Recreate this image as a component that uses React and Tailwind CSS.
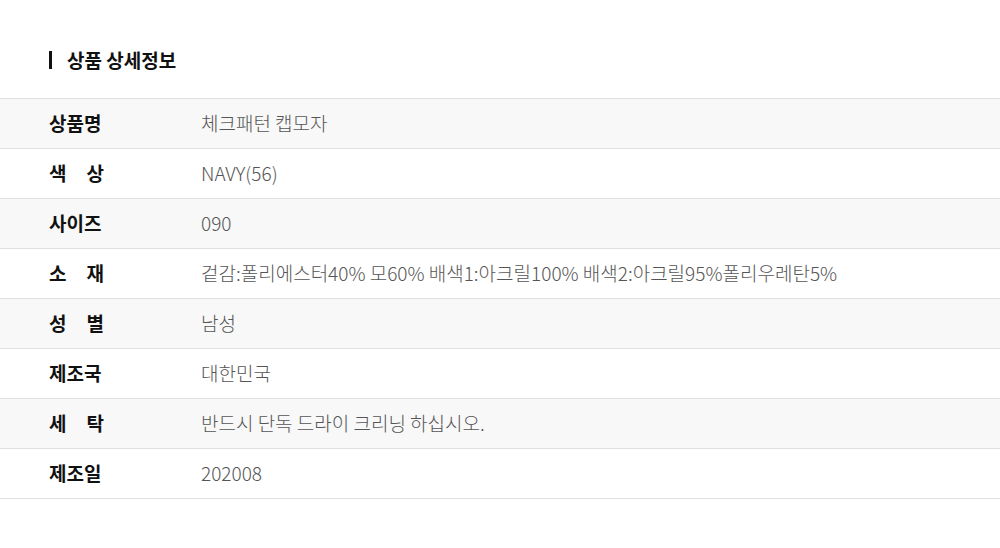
import React from 'react';

const rows = [
  { label: ['상품명'], value: '체크패턴 캡모자' },
  { label: ['색', '상'], value: 'NAVY(56)' },
  { label: ['사이즈'], value: '090' },
  { label: ['소', '재'], value: '겉감:폴리에스터40% 모60% 배색1:아크릴100% 배색2:아크릴95%폴리우레탄5%' },
  { label: ['성', '별'], value: '남성' },
  { label: ['제조국'], value: '대한민국' },
  { label: ['세', '탁'], value: '반드시 단독 드라이 크리닝 하십시오.' },
  { label: ['제조일'], value: '202008' },
];

export default function App() {
  return (
    <div
      className="w-[1000px] h-[548px] bg-white"
      style={{ fontFamily: '"Noto Sans CJK KR", "Noto Sans", sans-serif' }}
    >
      <div className="pt-[49px] pl-[49px] flex items-center h-[71px]">
        <span className="w-[3px] h-[18px] bg-[#111]" />
        <h2 className="ml-[15px] pb-[2px] text-[19px] font-bold text-[#111] leading-none">상품 상세정보</h2>
      </div>
      <div className="mt-[27px] border-t border-[#e0e0e0]">
        {rows.map((r, i) => (
          <div
            key={i}
            className={`flex items-center h-[50px] pb-[3px] border-b border-[#e0e0e0] ${i % 2 === 0 ? 'bg-[#f8f8f8]' : 'bg-white'}`}
          >
            <div className="w-[201px] shrink-0 pl-[49px]">
              <div className="w-[55px] flex justify-between text-[19px] font-bold text-[#111] leading-none">
                {r.label.map((c, j) => (
                  <span key={j}>{c}</span>
                ))}
              </div>
            </div>
            <div className="text-[19px] font-light text-[#555] leading-none">{r.value}</div>
          </div>
        ))}
      </div>
    </div>
  );
}
